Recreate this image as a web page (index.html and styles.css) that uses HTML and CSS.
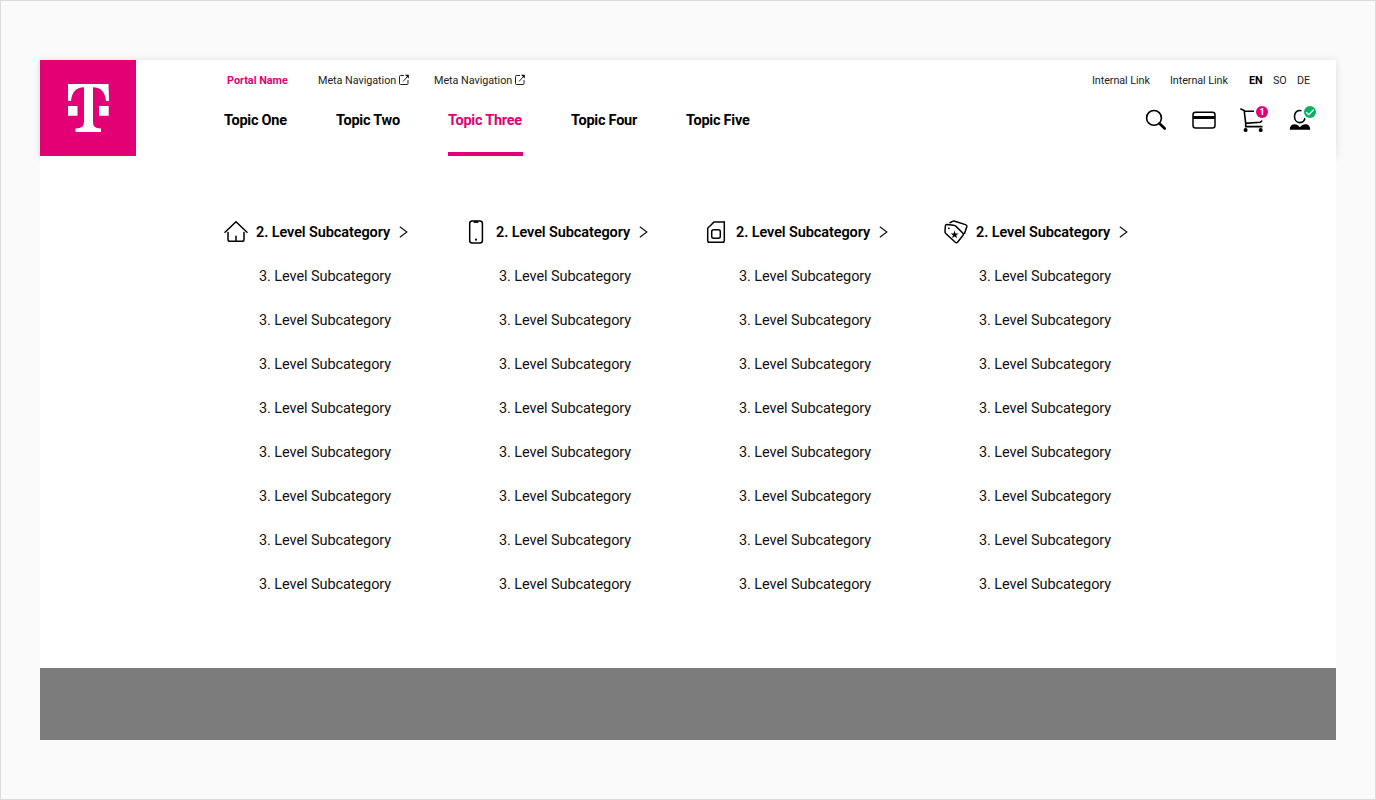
FILE: index.html
```html
<!DOCTYPE html>
<html lang="en">
<head>
<meta charset="utf-8">
<title>Portal Name</title>
<link rel="stylesheet" href="styles.css">
</head>
<body>
<div class="page">
  <header class="header">
    <a class="brand">
      <svg width="96" height="96" viewBox="0 0 96 96" fill="#fff"><path d="M28 24H68.500L69 40.700 66 41C65 32 61 27.200 53 27.200V61C53 66.500 54.500 68 61 68.500V72H35.500V68.500C42 68 44 66.500 44 61V27.200C36 27.200 32 32 31 41L28 40.700ZM28 46h9.500v9.800H28ZM59 46h9.700v9.800H59Z"/></svg>
    </a>
    <div class="bars">
      <div class="row meta">
        <nav class="meta-left">
          <a class="portal">Portal Name</a>
          <a class="ext"><span>Meta Navigation</span><svg width="12" height="12" viewBox="0 0 12 12" fill="none" stroke="#222"><path d="M6 1.500H2.500Q1.500 1.500 1.500 2.500V9.500Q1.500 10.500 2.500 10.500H9Q10 10.500 10 9.500V6M5 7.500 9 3"/><path d="M7 .8h3.800v3.700Z" fill="#000" stroke="none"/></svg></a>
          <a class="ext"><span>Meta Navigation</span><svg width="12" height="12" viewBox="0 0 12 12" fill="none" stroke="#222"><path d="M6 1.500H2.500Q1.500 1.500 1.500 2.500V9.500Q1.500 10.500 2.500 10.500H9Q10 10.500 10 9.500V6M5 7.500 9 3"/><path d="M7 .8h3.800v3.700Z" fill="#000" stroke="none"/></svg></a>
        </nav>
        <nav class="meta-right">
          <a>Internal Link</a><a>Internal Link</a><a class="lang-on">EN</a><a>SO</a><a>DE</a>
        </nav>
      </div>
      <div class="row main-row">
        <nav class="topics">
          <a>Topic One</a><a>Topic Two</a><a class="active">Topic Three</a><a>Topic Four</a><a>Topic Five</a>
        </nav>
        <div class="tools">
          <svg class="icon" viewBox="0 0 24 24" fill="none" stroke="#000"><circle cx="10" cy="9.900" r="7.400" stroke-width="1.600"/><path d="m15.500 15.500 5.200 5" stroke-width="2.700" stroke-linecap="round"/></svg>
          <svg class="icon" viewBox="0 0 24 24"><rect x="1" y="4.200" width="22" height="15.700" rx="2.500" fill="none" stroke="#000" stroke-width="1.500"/><path d="M1 8h22v3H1Z"/></svg>
          <span class="badged">
            <svg class="icon" viewBox="0 0 24 24" fill="none" stroke="#000" stroke-width="1.600"><path d="M.3 .8 4.200 2.600 5.700 15.300 20 14.300Q21.500 14 21.900 12.500M4.300 3.200H14M5.700 15.300V18.600H22.500"/><circle cx="5.600" cy="22.100" r="2" fill="#000" stroke="none"/><circle cx="20.700" cy="22.100" r="2" fill="#000" stroke="none"/></svg>
            <b class="badge count">1</b>
          </span>
          <span class="badged">
            <svg class="icon" viewBox="0 0 24 24"><path d="M13.500 2.700C9.500 1.800 6.500 4.500 6.500 8.200 6.500 12 8.600 14.600 11.700 14.600S16.800 12.400 17.200 9" fill="none" stroke="#000" stroke-width="1.600"/><path d="M1.800 21.800C1.800 18.400 3.300 16.300 6.200 16.300 9.200 16.300 9.800 17.200 11.900 19.200 14 17.200 14.800 16.300 17.700 16.300 20.500 16.300 22.200 18.400 22.200 21.800Z"/></svg>
            <span class="badge ok"><svg width="12" height="12" viewBox="0 0 12 12" fill="none" stroke="#fff" stroke-width="1.300"><path d="m2.200 6.200 2.500 2.500 5-5"/></svg></span>
          </span>
        </div>
      </div>
    </div>
  </header>
  <main class="panel">
    <section class="col">
      <h2><svg class="icon" viewBox="0 0 24 24" fill="none" stroke="#000" stroke-width="1.500"><path d="m1 12.300 11-10.500 11 10.500M4 12.500V19.500Q4 21.300 6 21.300H18Q20 21.300 20 19.500V12.500M12 21V16.300" stroke-linecap="round"/></svg><span>2. Level Subcategory</span><svg class="chev" viewBox="0 0 9 12"><path d="m.8.800 7 5.200-7 5.200"/></svg></h2>
      <a>3. Level Subcategory</a><a>3. Level Subcategory</a><a>3. Level Subcategory</a><a>3. Level Subcategory</a><a>3. Level Subcategory</a><a>3. Level Subcategory</a><a>3. Level Subcategory</a><a>3. Level Subcategory</a>
    </section>
    <section class="col">
      <h2><svg class="icon" viewBox="0 0 24 24" fill="none" stroke="#000" stroke-width="1.500"><rect x="5.700" y="1" width="12.700" height="22" rx="2.500"/><path d="M9.700 1.200h4.700v1.700H9.700Z" fill="#000" stroke="none"/><circle cx="12" cy="19.700" r="1.100" fill="#000" stroke="none"/></svg><span>2. Level Subcategory</span><svg class="chev" viewBox="0 0 9 12"><path d="m.8.800 7 5.200-7 5.200"/></svg></h2>
      <a>3. Level Subcategory</a><a>3. Level Subcategory</a><a>3. Level Subcategory</a><a>3. Level Subcategory</a><a>3. Level Subcategory</a><a>3. Level Subcategory</a><a>3. Level Subcategory</a><a>3. Level Subcategory</a>
    </section>
    <section class="col">
      <h2><svg class="icon" viewBox="0 0 24 24" fill="none" stroke="#000" stroke-width="1.500"><path d="M10 1.900H20.300V20.500Q20.300 22.300 18.500 22.300H5.500Q3.700 22.300 3.700 20.500V8.200Z"/><rect x="7.700" y="9.800" width="8.600" height="8.500" rx="2"/></svg><span>2. Level Subcategory</span><svg class="chev" viewBox="0 0 9 12"><path d="m.8.800 7 5.200-7 5.200"/></svg></h2>
      <a>3. Level Subcategory</a><a>3. Level Subcategory</a><a>3. Level Subcategory</a><a>3. Level Subcategory</a><a>3. Level Subcategory</a><a>3. Level Subcategory</a><a>3. Level Subcategory</a><a>3. Level Subcategory</a>
    </section>
    <section class="col">
      <h2><svg class="icon" viewBox="0 0 24 24" fill="none" stroke="#000" stroke-width="1.500" stroke-linejoin="round"><path d="M2.800 4.500 9.800 5.300Q11 5.400 12 6.400L18.700 13Q19.900 14.200 18.900 15.500L13.500 22.200Q12.500 23.300 11.300 22.200L2 13.800Q.9 12.700 1 11.200L1.400 5.700Q1.600 4.400 2.800 4.500ZM5.500 3 8.500 1.300Q9.500.600 10.800 1.200L21.500 4.600Q23.200 5.200 22.800 6.700L20.300 14"/><circle cx="4.900" cy="8.300" r=".9" fill="#000" stroke="none"/><path d="m10.500 10.600 1 2.800h3l-2.300 1.800.9 2.900-2.500-1.700-2.500 1.700.9-2.900-2.400-1.800h3Z" fill="#000" stroke="none"/></svg><span>2. Level Subcategory</span><svg class="chev" viewBox="0 0 9 12"><path d="m.8.800 7 5.200-7 5.200"/></svg></h2>
      <a>3. Level Subcategory</a><a>3. Level Subcategory</a><a>3. Level Subcategory</a><a>3. Level Subcategory</a><a>3. Level Subcategory</a><a>3. Level Subcategory</a><a>3. Level Subcategory</a><a>3. Level Subcategory</a>
    </section>
  </main>
  <div class="backdrop"></div>
</div>
</body>
</html>
```
FILE: styles.css
```css
* { box-sizing: border-box; }
body {
  margin: 0;
  height: 800px;
  padding: 59px 39px;
  border: 1px solid #dcdcdc;
  background: #fafafa;
  font-family: Roboto, "Liberation Sans", sans-serif;
  color: #000;
  overflow: hidden;
}
.page { width: 1296px; }
.header {
  display: flex;
  height: 96px;
  background: #fff;
  box-shadow: 0 1px 8px rgba(0, 0, 0, .12);
}
.brand { width: 96px; height: 96px; background: #e20074; }
.brand svg { display: block; }
.bars { flex: 1; padding: 0 24px 0 88px; }
.row { display: flex; justify-content: space-between; }
.meta { height: 40px; font-size: 10.8px; line-height: 42px; color: #222; }
.meta-left { display: grid; grid-template-columns: 91px 116px 96px; padding-left: 3px; }
.portal { color: #e20074; font-weight: 700; letter-spacing: 0; }
.ext { display: flex; letter-spacing: -.04px; white-space: nowrap; }
.ext span { width: 80px; }
.ext svg { margin-top: 14px; }
.meta-right { display: grid; grid-template-columns: 78px 79px 24px 24px 15px; letter-spacing: -.08px; }
.lang-on { color: #000; font-weight: 700; }
.main-row { height: 56px; }
.topics {
  display: grid;
  grid-template-columns: 64px 64px 75px 67px 64px;
  gap: 48px;
  font-size: 14.5px;
  font-weight: 700;
  letter-spacing: -.25px;
  line-height: 42px;
  white-space: nowrap;
}
.active { color: #e20074; border-bottom: 4px solid #e20074; }
.tools { display: flex; gap: 24px; padding-top: 8px; }
.icon { display: block; width: 24px; height: 24px; flex: none; }
.badged { position: relative; height: 24px; }
.badge {
  position: absolute;
  left: 16px;
  top: -2px;
  width: 12px;
  height: 12px;
  border-radius: 50%;
  box-shadow: 0 0 0 2px #fff;
  font-size: 9px;
  line-height: 12px;
  text-align: center;
  color: #fff;
}
.badge svg { display: block; }
.count { background: #e20074; }
.ok { background: #00b367; }
.panel {
  position: relative;
  display: grid;
  grid-template-columns: repeat(4, 240px);
  height: 512px;
  padding: 54px 0 0 184px;
  background: #fff;
}
.col h2 {
  display: flex;
  align-items: center;
  height: 44px;
  margin: 0;
  font-size: 14.5px;
  font-weight: 600;
  letter-spacing: -.1px;
  white-space: nowrap;
}
.col h2 span { width: 135px; margin: 0 8px; }
.chev { width: 9px; height: 12px; fill: none; stroke: #111; stroke-width: 1.2; }
.col a {
  display: block;
  height: 44px;
  padding-left: 35px;
  font-size: 14.5px;
  line-height: 46px;
  letter-spacing: -.08px;
  color: #111;
}
.backdrop { height: 72px; background: #7c7c7c; }
```
